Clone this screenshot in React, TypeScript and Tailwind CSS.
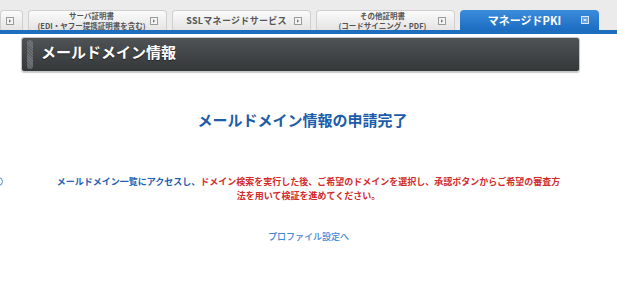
import React from "react";

const font = { fontFamily: '"Noto Sans CJK JP", "Noto Sans", sans-serif' };

function TabIcon({ active = false }: { active?: boolean }) {
  return (
    <svg width="8" height="8" viewBox="0 0 8 8" className="shrink-0">
      <rect x="0.5" y="0.5" width="7" height="7" fill={active ? "#6aa4e0" : "#f4f4f4"} stroke={active ? "#d8e8f8" : "#9a9a9a"} />
      {active ? (
        <path d="M2.2 3.2 L5.8 3.2 L4 5.2 Z" fill="#ffffff" />
      ) : (
        <path d="M3 2.2 L5.2 4 L3 5.8 Z" fill="#777" />
      )}
    </svg>
  );
}

function Tab({ children, w = "w-[139px]" }: { children?: React.ReactNode; w?: string }) {
  return (
    <div
      className={`${w} h-[20px] shrink-0 rounded-t-[4px] border border-b-0 border-[#cfcfcf] bg-gradient-to-b from-[#fbfbfb] to-[#e4e4e4] flex items-center pr-[8px]`}
    >
      {children}
    </div>
  );
}

export default function App() {
  return (
    <div className="w-[617px] h-[288px] bg-white overflow-hidden relative" style={font}>
      {/* tab strip */}
      <div className="bg-[#ebebeb] pt-[10px]">
        <div className="flex gap-[5px] items-end">
          <Tab w="w-[23px]">
            <div className="flex-1" />
            <TabIcon />
          </Tab>
          <Tab>
            <div className="flex-1 flex flex-col items-center leading-[10px] text-[7.5px] text-[#555] font-bold pl-[4px]">
              <span>サーバ証明書</span>
              <span>(EDI・ヤフー提携証明書を含む)</span>
            </div>
            <TabIcon />
          </Tab>
          <Tab>
            <div className="flex-1 flex justify-center text-[9px] text-[#555] font-bold pl-[6px] tracking-[0.3px]">
              SSLマネージドサービス
            </div>
            <TabIcon />
          </Tab>
          <Tab>
            <div className="flex-1 flex flex-col items-center leading-[10px] text-[7.5px] text-[#555] font-bold pl-[10px]">
              <span>その他証明書</span>
              <span>(コードサイニング・PDF)</span>
            </div>
            <TabIcon />
          </Tab>
          <div className="w-[139px] h-[20px] shrink-0 rounded-t-[4px] bg-gradient-to-b from-[#3b8ddc] to-[#1c6cc2] flex items-center pr-[10px]">
            <div className="flex-1 flex justify-center text-[11px] text-white font-bold pl-[8px]">
              マネージドPKI
            </div>
            <TabIcon active />
          </div>
        </div>
      </div>
      <div className="h-[4px] bg-[#1e6ec0]" />

      {/* section header */}
      <div className="mt-[3px] ml-[21px] w-[559px] h-[35px] rounded-[3px] border border-[#c4c6c8] bg-gradient-to-b from-[#505356] to-[#353839] flex items-center shadow-[0_1px_1px_rgba(0,0,0,0.2)]">
        <div
          className="ml-[5px] w-[6px] h-[29px] rounded-[3px] bg-[#666a6d]"
          style={{ backgroundImage: "repeating-linear-gradient(45deg, #5d6164 0 1px, #72767a 1px 2px)" }}
        />
        <div className="ml-[8px] text-[15px] font-bold text-white leading-none -mt-[6px] [text-shadow:0_1px_1px_rgba(0,0,0,0.5)]">
          メールドメイン情報
        </div>
      </div>

      {/* content */}
      <div className="flex flex-col items-center">
        <div className="mt-[37px] text-[15px] leading-[22px] font-bold text-[#1d5ca8] -ml-[12px]">
          メールドメイン情報の申請完了
        </div>
        <p className="mt-[44px] text-[9px] leading-[14px] font-bold text-center">
          <span className="text-[#1d60b4]">メールドメイン一覧にアクセスし、</span>
          <span className="text-[#d22b2b]">
            ドメイン検索を実行した後、ご希望のドメインを選択し、承認ボタンからご希望の審査方
            <br />
            法を用いて検証を進めてください。
          </span>
        </p>
        <div className="mt-[27px] text-[9px] leading-[14px] font-medium text-[#3f86d4]">プロファイル設定へ</div>
      </div>

      <div className="absolute left-[-6px] top-[177px] w-[9px] h-[9px] rounded-full border border-[#4a8ad0]" />
    </div>
  );
}
